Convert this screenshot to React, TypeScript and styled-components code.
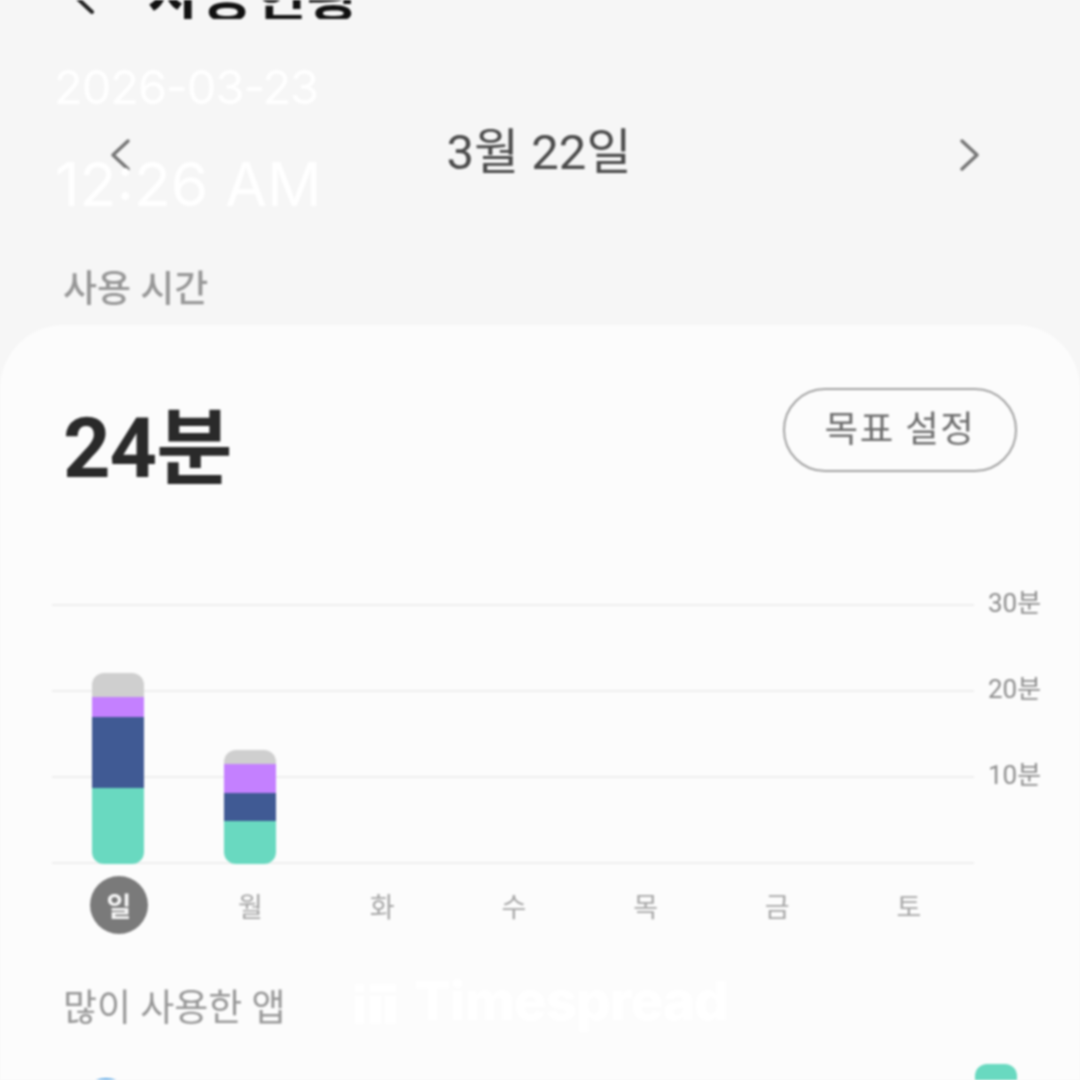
import React from "react";
import styled, { createGlobalStyle } from "styled-components";

const Global = createGlobalStyle`
  html, body { margin: 0; padding: 0; background: #f6f6f6; }
  #root { width: 1080px; height: 1080px; overflow: hidden; }
  * { box-sizing: border-box; }
`;

const Page = styled.div`
  position: relative;
  width: 1080px;
  height: 1080px;
  overflow: hidden;
  background: #f6f6f6;
  font-family: Roboto, "Noto Sans CJK KR", sans-serif;
  filter: blur(0.8px);
`;

const TitleBar = styled.div`
  height: 19px;
  display: flex;
  align-items: flex-end;
  padding-left: 70px;
  gap: 44px;
  overflow: hidden;
`;

const BackIcon = styled.svg`
  width: 34px;
  height: 40px;
  flex: none;
  margin-bottom: -3px;
`;

const Title = styled.div`
  font-size: 57px;
  line-height: 60px;
  font-weight: 700;
  color: #111;
  white-space: nowrap;
  margin-bottom: -8px;
  letter-spacing: 0.5px;
`;

const DateNav = styled.div`
  display: flex;
  align-items: center;
  justify-content: space-between;
  padding: 0 98px 0 108px;
  margin-top: 106px;
  height: 60px;
`;

const Chevron = styled.svg`
  width: 26px;
  height: 40px;
  color: #767676;
`;

const DateLabel = styled.div`
  font-size: 49px;
  line-height: 60px;
  color: #4a4a4a;
  margin: -5px 12px 0 0;
`;

const SectionLabel = styled.div`
  font-size: 37px;
  line-height: 44px;
  color: #979797;
  padding-left: 63px;
  margin-top: 83px;
  font-weight: 500;
`;

const Card = styled.section`
  margin-top: 13px;
  background: #fcfcfc;
  border-radius: 64px 64px 0 0;
  height: 800px;
  display: flex;
  flex-direction: column;
`;

const SummaryRow = styled.div`
  display: flex;
  justify-content: space-between;
  align-items: flex-start;
  padding: 63px 63px 0 63px;
`;

const Total = styled.div`
  font-size: 83px;
  line-height: 110px;
  font-weight: 700;
  color: #2a2a2a;
  letter-spacing: -1px;
  margin-top: 6px;
`;

const GoalButton = styled.button`
  width: 234px;
  height: 84px;
  border: 2.5px solid #a2a2a2;
  border-radius: 42px;
  background: transparent;
  color: #6e6e6e;
  font: 400 36.5px/1 Roboto, "Noto Sans CJK KR", sans-serif;
  letter-spacing: 1.5px;
  padding: 0;
`;

const Chart = styled.div`
  margin-top: 100px;
  padding-left: 52px;
`;

const Plot = styled.div`
  position: relative;
  width: 988px;
`;

const GridRow = styled.div<{ $h: number }>`
  display: flex;
  align-items: flex-start;
  height: ${(p) => p.$h}px;
`;

const GridLine = styled.div`
  width: 922px;
  height: 2px;
  background: #eeeeee;
  flex: none;
`;

const AxisLabel = styled.span`
  font-size: 26px;
  line-height: 30px;
  color: #8d8d8d;
  margin: -16px 0 0 14px;
  white-space: nowrap;
`;

const BarsLayer = styled.div`
  position: absolute;
  left: 0;
  bottom: 12px;
  width: 922px;
  display: grid;
  grid-template-columns: repeat(7, 131.7px);
  align-items: flex-end;
`;

const BarSlot = styled.div`
  display: flex;
  justify-content: center;
`;

const Bar = styled.div`
  width: 52px;
  display: flex;
  flex-direction: column;
  border-radius: 12px;
  overflow: hidden;
`;

const Segment = styled.div<{ $color: string; $h: number }>`
  background: ${(p) => p.$color};
  height: ${(p) => p.$h}px;
`;

const DayRow = styled.div`
  display: grid;
  grid-template-columns: repeat(7, 131.7px);
  width: 923px;
  padding-left: 1px;
`;

const Day = styled.div<{ $active?: boolean }>`
  justify-self: center;
  width: 58px;
  height: 58px;
  border-radius: 50%;
  display: flex;
  align-items: center;
  justify-content: center;
  font-size: 27px;
  font-weight: ${(p) => (p.$active ? 700 : 400)};
  color: ${(p) => (p.$active ? "#f6f6f6" : "#a5a5a5")};
  background: ${(p) => (p.$active ? "#7a7a7a" : "transparent")};
`;

const MostUsedLabel = styled.div`
  font-size: 37px;
  line-height: 44px;
  color: #979797;
  font-weight: 400;
  padding-left: 63px;
  margin-top: 53px;
`;

const AppRow = styled.div`
  display: flex;
  justify-content: space-between;
  align-items: flex-start;
  padding: 0 63px 0 78px;
  margin-top: 33px;
`;

const AppIcon = styled.div`
  width: 56px;
  height: 56px;
  border-radius: 50%;
  background: #5aa7e6;
  margin-top: 14px;
`;

const AppMarker = styled.div`
  width: 42px;
  height: 40px;
  border-radius: 12px;
  background: #69d9c0;
`;

const StampDate = styled.div`
  position: absolute;
  left: 54px;
  top: 61px;
  font-size: 47px;
  line-height: 52px;
  color: #ffffff;
  font-family: Inter, sans-serif;
  font-weight: 400;
  letter-spacing: -1px;
`;

const StampTime = styled.div`
  position: absolute;
  left: 55px;
  top: 148px;
  font-size: 60.5px;
  line-height: 72px;
  color: #ffffff;
  font-family: Inter, sans-serif;
  font-weight: 400;
`;

const Watermark = styled.div`
  position: absolute;
  left: 355px;
  top: 974px;
  display: flex;
  align-items: center;
  gap: 18px;
  color: #ffffff;
  font-family: Inter, sans-serif;
  font-size: 54px;
  line-height: 54px;
  font-weight: 800;
  letter-spacing: -0.6px;
`;

const WatermarkLogo = styled.svg`
  width: 41px;
  height: 42px;
  margin-top: 6px;
`;

const bars = [
  [
    ["#cfcfcf", 24],
    ["#c480ff", 20],
    ["#405a94", 71],
    ["#69d9c0", 76],
  ],
  [
    ["#cfcfcf", 14],
    ["#c480ff", 29],
    ["#405a94", 28],
    ["#69d9c0", 43],
  ],
] as [string, number][][];

const days = ["일", "월", "화", "수", "목", "금", "토"];
const axis: [string, number][] = [
  ["30분", 86],
  ["20분", 86],
  ["10분", 86],
  ["", 14],
];

export default function App() {
  return (
    <Page>
      <Global />
      <TitleBar>
        <BackIcon viewBox="0 0 34 40" fill="none" stroke="#222" strokeWidth="4" strokeLinecap="round">
          <path d="M22 0 L6 15 L22 30" />
        </BackIcon>
        <Title>사용현황</Title>
      </TitleBar>
      <DateNav>
        <Chevron viewBox="0 0 26 40" fill="none" stroke="currentColor" strokeWidth="3.5" strokeLinecap="round" strokeLinejoin="round">
          <path d="M20 6 L5 20 L20 34" />
        </Chevron>
        <DateLabel>3월 22일</DateLabel>
        <Chevron viewBox="0 0 26 40" fill="none" stroke="currentColor" strokeWidth="3.5" strokeLinecap="round" strokeLinejoin="round">
          <path d="M6 6 L21 20 L6 34" />
        </Chevron>
      </DateNav>
      <SectionLabel>사용 시간</SectionLabel>
      <Card>
        <SummaryRow>
          <Total>24분</Total>
          <GoalButton>목표 설정</GoalButton>
        </SummaryRow>
        <Chart>
          <Plot>
            {axis.map(([a, h], i) => (
              <GridRow key={i} $h={h}>
                <GridLine />
                <AxisLabel>{a}</AxisLabel>
              </GridRow>
            ))}
            <BarsLayer>
              {days.map((d, i) => (
                <BarSlot key={d}>
                  {bars[i] && (
                    <Bar>
                      {bars[i].map(([c, h]) => (
                        <Segment key={c} $color={c} $h={h} />
                      ))}
                    </Bar>
                  )}
                </BarSlot>
              ))}
            </BarsLayer>
          </Plot>
          <DayRow>
            {days.map((d, i) => (
              <Day key={d} $active={i === 0}>{d}</Day>
            ))}
          </DayRow>
        </Chart>
        <MostUsedLabel>많이 사용한 앱</MostUsedLabel>
        <AppRow>
          <AppIcon />
          <AppMarker />
        </AppRow>
      </Card>
      <StampDate>2026-03-23</StampDate>
      <StampTime>12:26 AM</StampTime>
      <Watermark>
        <WatermarkLogo viewBox="0 0 44 42" fill="#fff">
          <rect x="0" y="0" width="10" height="8" />
          <rect x="0" y="12" width="10" height="30" />
          <rect x="16" y="0" width="28" height="8" />
          <rect x="16" y="12" width="12" height="30" />
          <rect x="32" y="12" width="12" height="30" />
        </WatermarkLogo>
        Timespread
      </Watermark>
    </Page>
  );
}
